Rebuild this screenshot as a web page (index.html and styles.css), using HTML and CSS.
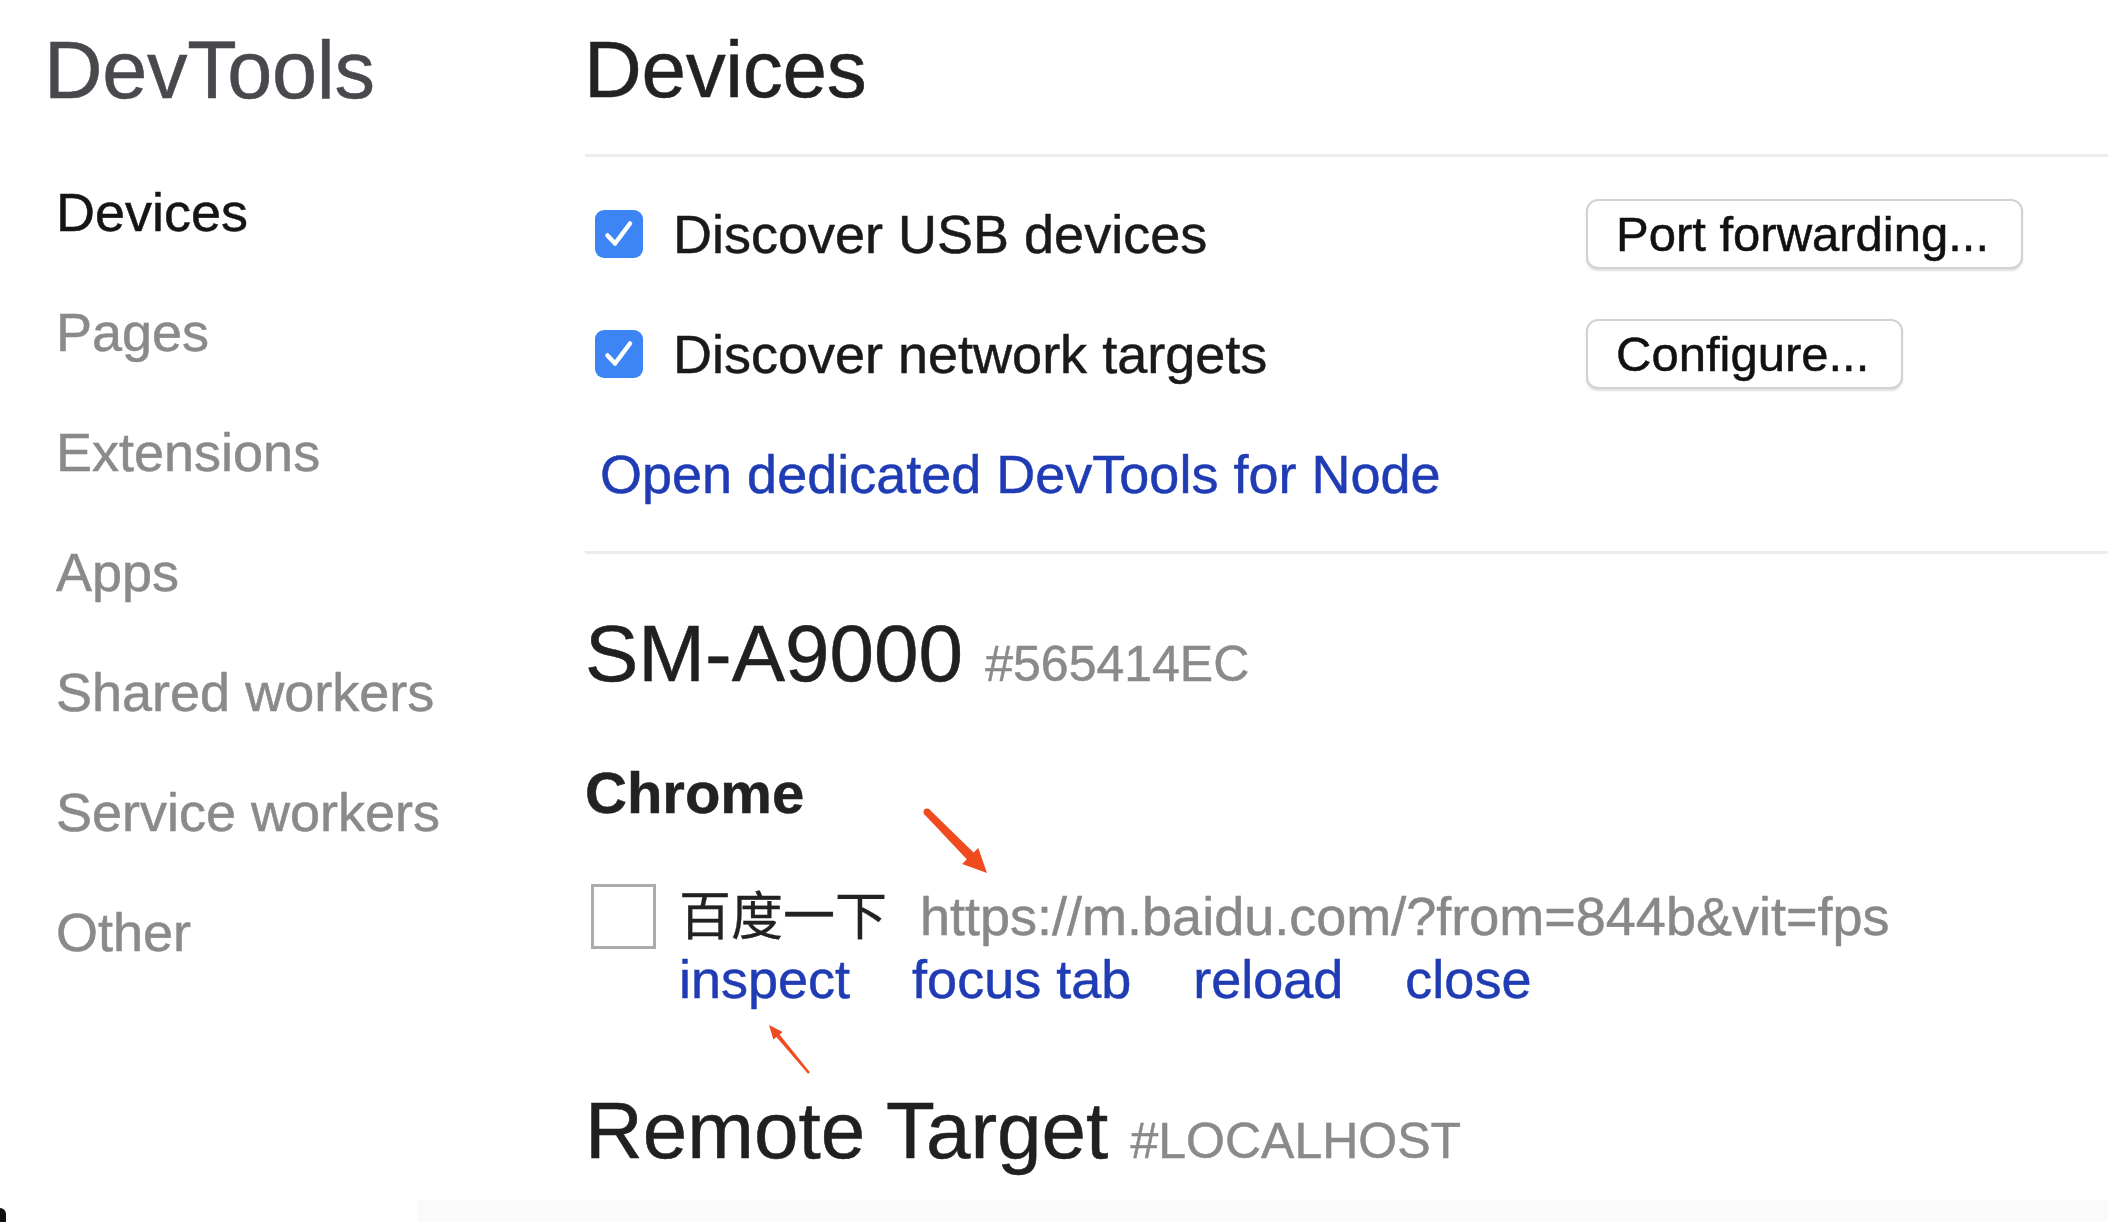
FILE: index.html
```html
<!DOCTYPE html>
<html lang="en">
<head>
<meta charset="utf-8">
<title>DevTools - Devices</title>
<link rel="stylesheet" href="styles.css">
</head>
<body>
<div class="page">
  <aside class="sidebar">
    <h1 class="brand">DevTools</h1>
    <nav class="nav">
      <div class="nav-item active">Devices</div>
      <div class="nav-item">Pages</div>
      <div class="nav-item">Extensions</div>
      <div class="nav-item">Apps</div>
      <div class="nav-item">Shared workers</div>
      <div class="nav-item">Service workers</div>
      <div class="nav-item">Other</div>
    </nav>
  </aside>

  <main class="content">
    <header class="content-header">
      <h2 class="page-title">Devices</h2>
    </header>

    <section class="settings">
      <div class="setting-row">
        <label class="setting-label">
          <span class="box checked"><svg viewBox="0 0 48 48" width="48" height="48"><path d="M12.5 25.5 L20 33.5 L35 13.5" fill="none" stroke="#fff" stroke-width="4.5" stroke-linecap="round" stroke-linejoin="round"/></svg></span>
          <span>Discover USB devices</span>
        </label>
        <button class="btn">Port forwarding...</button>
      </div>
      <div class="setting-row">
        <label class="setting-label">
          <span class="box checked"><svg viewBox="0 0 48 48" width="48" height="48"><path d="M12.5 25.5 L20 33.5 L35 13.5" fill="none" stroke="#fff" stroke-width="4.5" stroke-linecap="round" stroke-linejoin="round"/></svg></span>
          <span>Discover network targets</span>
        </label>
        <button class="btn">Configure...</button>
      </div>
      <div class="link-row">
        <a class="link" href="#">Open dedicated DevTools for Node</a>
      </div>
    </section>

    <section class="device">
      <h2 class="device-name">SM-A9000 <span class="serial">#565414EC</span></h2>
      <h3 class="browser-name">Chrome</h3>
      <div class="target">
        <span class="box empty"></span>
        <div class="target-body">
          <div class="target-line"><span class="target-title">百度一下</span><span class="target-url">https://m.baidu.com/?from=844b&amp;vit=fps</span></div>
          <div class="actions">
            <a class="link action" href="#">inspect</a>
            <a class="link action" href="#">focus tab</a>
            <a class="link action" href="#">reload</a>
            <a class="link action" href="#">close</a>
          </div>
        </div>
      </div>
    </section>

    <section class="device remote">
      <h2 class="device-name">Remote Target <span class="serial">#LOCALHOST</span></h2>
    </section>
  </main>
</div>

<svg class="arrow arrow-big" width="110" height="100" viewBox="0 0 110 100">
  <polygon points="29.5,19.5 73.6,62.6 78.3,58 87,83 62.2,73.9 66.8,69.3 24.5,24.5" fill="#f04b1e"/>
  <circle cx="27" cy="22" r="3.5" fill="#f04b1e"/>
</svg>
<svg class="arrow arrow-small" width="80" height="80" viewBox="0 0 80 80">
  <polygon points="59.9,62.2 29.5,24.5 32.6,21.9 19,15 23.35,29.6 26.4,27 58.1,63.8" fill="#f04b1e"/>
</svg>
<div class="bottom-strip"></div>
<div class="corner"></div>
</body>
</html>
```

FILE: styles.css
```css
html, body {
  margin: 0;
  padding: 0;
  background: #ffffff;
}

body {
  font-family: "Liberation Sans", Arial, "Noto Sans CJK SC", sans-serif;
  color: #1d1d1f;
  width: 2108px;
  height: 1222px;
  overflow: hidden;
  position: relative;
  -webkit-text-stroke: 0.5px currentColor;
}

.page {
  display: flex;
  align-items: flex-start;
}

/* Sidebar */
.sidebar {
  width: 585px;
  flex: none;
}

.brand {
  margin: 31px 0 0 44px;
  font-size: 81px;
  line-height: 78px;
  font-weight: normal;
  color: #48484d;
  letter-spacing: -0.3px;
}

.nav {
  margin-top: 43px;
  padding-left: 56px;
}

.nav-item {
  height: 120px;
  line-height: 120px;
  font-size: 54px;
  color: #8a8a8a;
}

.nav-item.active {
  color: #151515;
}

/* Content */
.content {
  flex: 1;
  min-width: 0;
}

.content-header {
  padding-bottom: 45px;
  border-bottom: 3px solid #ececec;
}

.page-title {
  margin: 31px 0 0 -1px;
  font-size: 80px;
  line-height: 78px;
  font-weight: normal;
  color: #222;
  letter-spacing: -0.3px;
}

.settings {
  padding: 17px 0;
  border-bottom: 3px solid #ececec;
}

.setting-row {
  height: 120px;
  display: flex;
  align-items: center;
}

.setting-label {
  width: 1001px;
  flex: none;
  display: flex;
  align-items: center;
  font-size: 54px;
  color: #1a1a1a;
}

.box {
  flex: none;
  box-sizing: border-box;
  display: block;
}

.box.checked {
  width: 48px;
  height: 48px;
  margin-left: 10px;
  margin-right: 30px;
  border-radius: 9px;
  background: #3d84f5;
}

.box.checked svg {
  display: block;
}

.btn {
  box-sizing: border-box;
  height: 70px;
  padding: 0 32px 0 28px;
  font-family: "Liberation Sans", Arial, sans-serif;
  font-size: 49px;
  color: #111;
  background: #ffffff;
  border: 2px solid #d2d2d2;
  border-radius: 12px;
  box-shadow: 0 2px 2px rgba(0, 0, 0, 0.12);
  -webkit-text-stroke: 0.5px currentColor;
}

.link-row {
  height: 120px;
  display: flex;
  align-items: center;
  padding-left: 15px;
}

.link {
  color: #1f3cb4;
  text-decoration: none;
  font-size: 54px;
}

/* Device section */
.device-name {
  margin: 60px 0 0 0;
  font-size: 80px;
  line-height: 80px;
  font-weight: normal;
  color: #202020;
}

.serial {
  font-size: 50px;
  color: #8a8a8a;
}

.browser-name {
  margin: 60px 0 0 0;
  font-size: 58px;
  line-height: 58px;
  font-weight: bold;
  color: #222;
}

.target {
  margin-top: 62px;
  display: flex;
  align-items: flex-start;
}

.box.empty {
  width: 65px;
  height: 65px;
  margin-left: 6px;
  margin-right: 23px;
  border: 3px solid #acacac;
  background: #fff;
}

.target-body {
  padding-top: 3px;
  font-size: 54px;
  line-height: 58px;
}

.target-line {
  white-space: nowrap;
}

.target-title {
  font-family: "Liberation Sans", "Noto Sans CJK SC", sans-serif;
  font-size: 52px;
  color: #222;
  margin-right: 33px;
  -webkit-text-stroke: 0.3px currentColor;
}

.target-url {
  color: #888;
}

.actions {
  display: flex;
  margin-top: 4px;
}

.action {
  margin-right: 62px;
}

.remote .device-name {
  margin-top: 83px;
}

/* Annotations */
.arrow {
  position: absolute;
  display: block;
}

.arrow-big {
  left: 900px;
  top: 790px;
}

.arrow-small {
  left: 750px;
  top: 1010px;
}

.bottom-strip {
  position: absolute;
  left: 417px;
  right: 0;
  bottom: 0;
  height: 22px;
  background: #fafafa;
}

.corner {
  position: absolute;
  left: 0;
  bottom: 0;
  width: 6px;
  height: 14px;
  background: #111;
  border-top-right-radius: 14px 14px;
}
```
